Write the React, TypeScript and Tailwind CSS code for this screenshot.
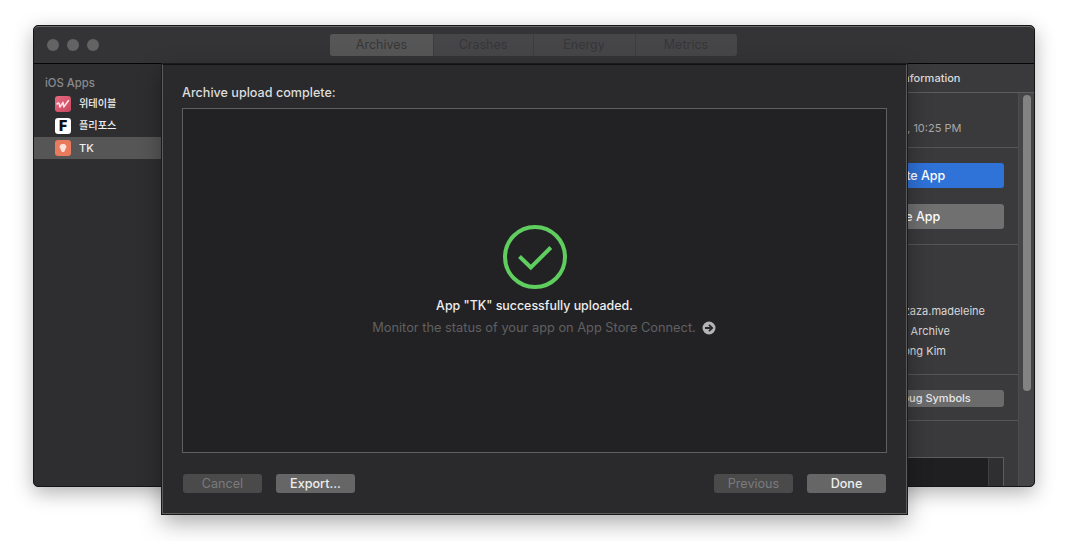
export default function App() {
  const seg = [
    { s: "Crashes", w: "w-[100px]" },
    { s: "Energy", w: "w-[102px]" },
    { s: "Metrics", w: "w-[102px]" },
  ];
  return (
    <div className="w-[1068px] h-[541px] bg-white overflow-hidden pl-[33px] pt-[25px] font-['Inter','Noto_Sans_CJK_KR',sans-serif]">
      <div className="relative w-[1002px] h-[462px] rounded-[5px] bg-[#2d2d2f] border border-[#151515] shadow-[0_6px_20px_rgba(0,0,0,0.3)] flex flex-col">
        <div className="h-[38px] shrink-0 rounded-t-[5px] bg-[#343436] border-t border-[#6a6a6a] border-b-[#050505] border-b flex items-center pl-[13px] relative">
          <div className="flex gap-[8px]">
            <span className="w-[12px] h-[12px] rounded-full bg-[#636364]" />
            <span className="w-[12px] h-[12px] rounded-full bg-[#636364]" />
            <span className="w-[12px] h-[12px] rounded-full bg-[#636364]" />
          </div>
          <div className="ml-[231px] w-[407px] h-[22px] rounded-[3px] bg-[#464648] flex text-[12.5px] text-[#363638] overflow-hidden">
            <div className="w-[103px] bg-[#565657] flex items-center justify-center pt-[1px]">Archives</div>
            {seg.map(({ s, w }) => (
              <div key={s} className={`${w} border-l border-[#3d3d3f] flex items-center justify-center pt-[1px] pr-[1px]`}>{s}</div>
            ))}
          </div>
        </div>
        <div className="flex-1 min-h-0 flex overflow-hidden rounded-b-[5px]">
          <div className="w-[128px] shrink-0 bg-[#2e2e30] border-r border-[#5a5a5c] pt-[12px] text-[10.2px]">
            <div className="pl-[11px] h-[14px] leading-[14px] text-[11.3px] font-medium text-[#8a8a8c]">iOS Apps</div>
            <div className="mt-[3px] text-[#f0f0f0]">
              <div className="h-[22px] pl-[21px] flex items-center gap-[8px]">
                <span className="w-[16px] h-[16px] rounded-[3px] bg-gradient-to-br from-[#e86a82] to-[#c8475f] flex items-center justify-center">
                  <svg width="14" height="10" viewBox="0 0 14 10" fill="none" stroke="#ffe3e8" strokeWidth="1.5" strokeLinecap="round" strokeLinejoin="round">
                    <path d="M1 5 C2 3.6 3 3.8 3.2 5 L4 8 L7 3.4 L7.8 8 L12.5 1.5" />
                  </svg>
                </span>
                <span className="font-medium">위테이블</span>
              </div>
              <div className="h-[22px] pl-[21px] flex items-center gap-[8px]">
                <span className="w-[16px] h-[16px] rounded-[3px] bg-white flex items-center justify-center text-[14px] leading-none font-black text-[#111]">F</span>
                <span className="font-medium">플리포스</span>
              </div>
              <div className="h-[22px] pl-[21px] flex items-center gap-[8px] bg-[#565657]">
                <span className="w-[16px] h-[16px] rounded-[3px] bg-[#ea7a5e] flex items-center justify-center">
                  <svg width="10" height="10" viewBox="0 0 10 10" fill="#fde3da">
                    <path d="M5 1 C7.6 1 8.8 2.8 8.3 4.6 C7.9 5.8 7.2 6 7 7.2 C6.8 8.4 6 9 5 9 C4 9 3.2 8.4 3 7.2 C2.8 6 2.1 5.8 1.7 4.6 C1.2 2.8 2.4 1 5 1 Z" />
                  </svg>
                </span>
                <span className="text-[11px] font-medium">TK</span>
              </div>
            </div>
          </div>
          <div className="flex-1 bg-[#2a2a2c]" />
          <div className="w-[252px] shrink-0 bg-[#3a3a3c] flex flex-col text-[11px] text-[#d6d6d6]">
            <div className="h-[29px] shrink-0 border-b border-[#5d5d5f] flex items-center pl-[75px] font-medium text-[#dcdcdc] text-[11px]">
              Archive Information
            </div>
            <div className="flex-1 min-h-0 flex">
              <div className="flex-1 min-w-0 overflow-hidden border-r border-[#4d4d4f]">
                <div className="h-[55px] border-b border-[#565658] pt-[27px] pl-[90px] leading-[16px] text-[#a8a8a8]">Aug 12, 10:25 PM</div>
                <div className="h-[97px] border-b border-[#565658] pt-[15px] pl-[15px] pr-[14px] flex flex-col gap-[16px]">
                  <div className="h-[25px] rounded-[3px] bg-[#2f72d8] flex items-center justify-center pl-[14px] pt-[1px] text-[12.5px] font-medium text-white">Validate App</div>
                  <div className="h-[25px] rounded-[3px] bg-[#707071] flex items-center justify-center pr-[6px] pt-[1px] text-[12.5px] font-medium text-white">Distribute App</div>
                </div>
                <div className="h-[130px] border-b border-[#565658] pt-[58px] flex flex-col items-end pr-[33px] gap-[4px] leading-[16px] text-[#d8d8d8]">
                  <span>kazaza.madeleine</span>
                  <span className="pr-[35px]">iOS App Archive</span>
                  <span className="pr-[39px]">Youngjong Kim</span>
                </div>
                <div className="h-[46px] border-b border-[#565658] pt-[15px] pl-[15px] pr-[14px]">
                  <div className="h-[17px] rounded-[3px] bg-[#6b6b6c] flex items-center justify-center pl-[2px] text-[11px] font-medium text-[#e6e6e6]">Download Debug Symbols</div>
                </div>
                <div className="pt-[36px] pl-[15px] pr-[14px]">
                  <div className="h-[40px] border border-[#5d5d5f] flex">
                    <div className="flex-1 bg-[#1f1f21]" />
                    <div className="w-[15px] border-l border-[#3f3f41] bg-[#2f2f31]" />
                  </div>
                </div>
              </div>
              <div className="w-[15px] shrink-0 bg-[#454547] pt-[2px] flex justify-center">
                <div className="w-[8px] h-[296px] rounded-full bg-[#838384]" />
              </div>
            </div>
          </div>
        </div>
        <div className="absolute left-[128px] top-[38px] w-[745px] h-[450px] bg-[#2a2a2c] border border-[#5c5c5e] border-t-[#111] outline outline-1 outline-[#1a1a1a] shadow-[0_8px_22px_rgba(0,0,0,0.35)] px-[19px] pt-[20px] flex flex-col">
          <div className="h-[16px] leading-[16px] text-[12.6px] font-medium text-[#dddddd]">Archive upload complete:</div>
          <div className="mt-[7px] h-[345px] border border-[#5f5f61] bg-[#222224] flex flex-col items-center pt-[116px]">
            <svg width="64" height="64" viewBox="0 0 64 64" fill="none" stroke="#5fce5f" strokeWidth="4">
              <circle cx="32" cy="32" r="30" />
              <path d="M16.5 31.5 L27.8 42.5 L47.8 22.5" strokeWidth="4" />
            </svg>
            <div className="mt-[9px] h-[16px] leading-[16px] text-[12.4px] font-medium text-[#eeeeee]">App "TK" successfully uploaded.</div>
            <div className="mt-[6px] pl-[19px] flex items-center gap-[6px] h-[16px] leading-[16px] text-[12.8px] text-[#606062]">
              <span>Monitor the status of your app on App Store Connect.</span>
              <svg width="14" height="14" viewBox="0 0 14 14">
                <circle cx="7" cy="7" r="6.5" fill="#b4b4b4" />
                <path d="M3 7 H10 M7 3.8 L10.2 7 L7 10.2" stroke="#2a2a2c" strokeWidth="1.8" fill="none" />
              </svg>
            </div>
          </div>
          <div className="mt-[21px] flex justify-between text-[12.6px] px-[1px]">
            <div className="flex gap-[14px]">
              <div className="w-[79px] h-[19px] rounded-[3px] bg-[#4a4a4b] flex items-center justify-center pt-[1px] text-[#7b7b7c]">Cancel</div>
              <div className="w-[79px] h-[19px] rounded-[3px] bg-[#666667] flex items-center justify-center pt-[1px] font-medium text-[#ededed]">Export...</div>
            </div>
            <div className="flex gap-[14px]">
              <div className="w-[79px] h-[19px] rounded-[3px] bg-[#4a4a4b] flex items-center justify-center pt-[1px] text-[#7b7b7c]">Previous</div>
              <div className="w-[79px] h-[19px] rounded-[3px] bg-[#666667] flex items-center justify-center pt-[1px] font-medium text-[#ededed]">Done</div>
            </div>
          </div>
        </div>
      </div>
    </div>
  );
}
